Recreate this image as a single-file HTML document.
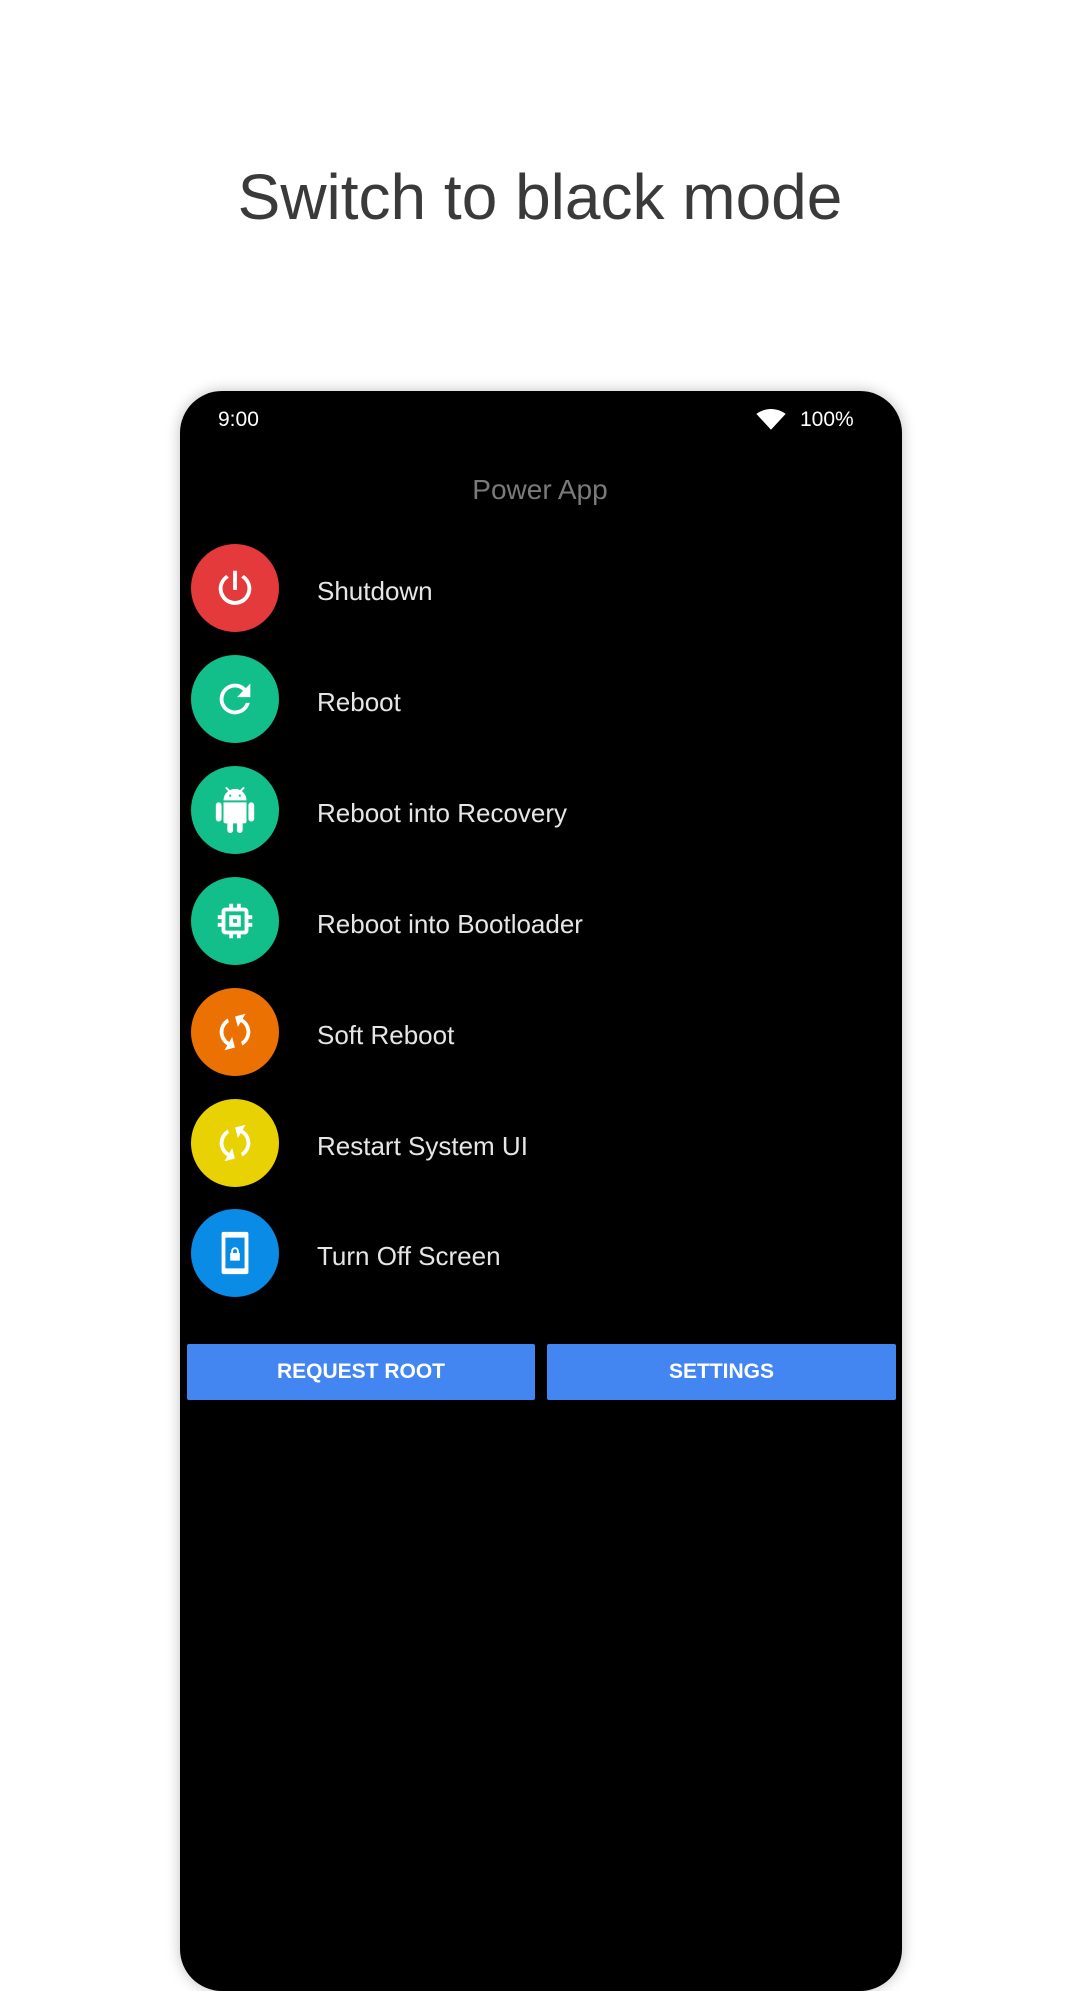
<!DOCTYPE html>
<html><head><meta charset="utf-8"><style>
*{margin:0;padding:0;box-sizing:border-box}
body{width:1080px;height:1920px;background:#fff;position:relative;overflow:hidden;font-family:"Liberation Sans","DejaVu Sans",sans-serif}
.title{position:absolute;top:160px;left:0;width:1080px;text-align:center;font-size:64px;color:#3a3a3a}
.phone{position:absolute;left:180px;top:391px;width:722px;height:1600px;background:#000;border-radius:42px;box-shadow:0 0 14px rgba(0,0,0,.25)}
.st{position:absolute;top:408px;font-size:21px;color:#fff}
.app{position:absolute;top:474px;left:0;width:1080px;text-align:center;font-size:28px;color:#7a7a7a}
.row{position:absolute;left:191px;width:600px;height:88px}
.c{position:absolute;left:0;top:0;width:88px;height:88px;border-radius:50%;display:flex;align-items:center;justify-content:center}
.c svg{width:46px;height:46px;fill:#fff}
.t{position:absolute;left:126px;top:32px;font-size:26px;color:#e6e6e6}
.btn{position:absolute;top:1344px;height:56px;background:#4386f2;color:#fff;font-weight:bold;font-size:21px;display:flex;align-items:center;justify-content:center;border-radius:2px}
</style></head><body>
<div class="title">Switch to black mode</div>
<div class="phone"></div>
<div class="st" style="left:218px">9:00</div>
<svg style="position:absolute;left:756px;top:409px" width="30" height="22" viewBox="0 0 24 18"><path d="M12 17L0 4C3.5 1.5 7.5 0 12 0s8.5 1.5 12 4z" fill="#fff"/></svg>
<div class="st" style="left:800px">100%</div>
<div class="app">Power App</div>

<div class="row" style="top:544px"><div class="c" style="background:#e53a3c"><svg viewBox="0 0 24 24"><path d="M11 3h2v10h-2z"/><path d="M16.6 5.2l-1.4 1.4A6.5 6.5 0 1 1 8.8 6.6L7.4 5.2A8.5 8.5 0 1 0 16.6 5.2z"/></svg></div><div class="t">Shutdown</div></div>
<div class="row" style="top:655px"><div class="c" style="background:#12bf8b"><svg viewBox="0 0 24 24"><path d="M17.65 6.35A7.96 7.96 0 0 0 12 4a8 8 0 1 0 7.73 10h-2.08A6 6 0 1 1 12 6c1.66 0 3.14.69 4.22 1.78L13 11h7V4l-2.35 2.35z"/></svg></div><div class="t">Reboot</div></div>
<div class="row" style="top:766px"><div class="c" style="background:#12bf8b"><svg viewBox="0 0 24 24"><path d="M6 18c0 .55.45 1 1 1h1v3.5c0 .83.67 1.5 1.5 1.5s1.5-.67 1.5-1.5V19h2v3.5c0 .83.67 1.5 1.5 1.5s1.5-.67 1.5-1.5V19h1c.55 0 1-.45 1-1V8H6v10zM3.5 8C2.67 8 2 8.67 2 9.5v7c0 .83.67 1.5 1.5 1.5S5 17.330 5 16.5v-7C5 8.67 4.33 8 3.5 8zm17 0c-.83 0-1.5.67-1.5 1.5v7c0 .83.67 1.5 1.5 1.5s1.5-.67 1.5-1.5v-7c0-.83-.67-1.5-1.5-1.5zm-4.97-5.84l1.3-1.3c.2-.2.2-.51 0-.71-.2-.2-.51-.2-.71 0l-1.48 1.48A5.84 5.84 0 0 0 12 1c-.96 0-1.86.23-2.66.63L7.85.15c-.2-.2-.51-.2-.71 0-.2.2-.2.51 0 .71l1.31 1.31A5.98 5.98 0 0 0 6 7h12c0-1.99-.97-3.75-2.47-4.84zM10 5H9V4h1v1zm5 0h-1V4h1v1z"/></svg></div><div class="t">Reboot into Recovery</div></div>
<div class="row" style="top:877px"><div class="c" style="background:#12bf8b"><svg viewBox="0 0 24 24"><path d="M15 9H9v6h6V9zm-2 4h-2v-2h2v2zm8-2V9h-2V7c0-1.1-.9-2-2-2h-2V3h-2v2h-2V3H9v2H7c-1.1 0-2 .9-2 2v2H3v2h2v2H3v2h2v2c0 1.1.9 2 2 2h2v2h2v-2h2v2h2v-2h2c1.1 0 2-.9 2-2v-2h2v-2h-2v-2h2zm-4 6H7V7h10v10z"/></svg></div><div class="t">Reboot into Bootloader</div></div>
<div class="row" style="top:988px"><div class="c" style="background:#ec7103"><svg viewBox="0 0 24 24"><path d="M12 4V1L8 5l4 4V6c3.31 0 6 2.69 6 6 0 1.01-.25 1.97-.7 2.8l1.46 1.46A7.93 7.93 0 0 0 20 12c0-4.42-3.58-8-8-8zm0 14c-3.31 0-6-2.69-6-6 0-1.01.25-1.97.7-2.8L5.24 7.74A7.93 7.93 0 0 0 4 12c0 4.42 3.58 8 8 8v3l4-4-4-4v3z" transform="rotate(30 12 12)"/></svg></div><div class="t">Soft Reboot</div></div>
<div class="row" style="top:1099px"><div class="c" style="background:#e8d203"><svg viewBox="0 0 24 24"><path d="M12 4V1L8 5l4 4V6c3.31 0 6 2.69 6 6 0 1.01-.25 1.97-.7 2.8l1.46 1.46A7.93 7.93 0 0 0 20 12c0-4.42-3.58-8-8-8zm0 14c-3.31 0-6-2.69-6-6 0-1.01.25-1.97.7-2.8L5.24 7.74A7.93 7.93 0 0 0 4 12c0 4.42 3.58 8 8 8v3l4-4-4-4v3z" transform="rotate(30 12 12)"/></svg></div><div class="t">Restart System UI</div></div>
<div class="row" style="top:1209px"><div class="c" style="background:#0a8be6"><svg viewBox="0 0 24 24"><path d="M6 1h12a1 1 0 0 1 1 1v20a1 1 0 0 1-1 1H6a1 1 0 0 1-1-1V2a1 1 0 0 1 1-1zm1 3v16h10V4z"/><path d="M10 12v-1a2 2 0 0 1 4 0v1h.5v4h-5v-4zm1 0h2v-1a1 1 0 0 0-2 0z"/></svg></div><div class="t">Turn Off Screen</div></div>

<div class="btn" style="left:187px;width:348px">REQUEST ROOT</div>
<div class="btn" style="left:547px;width:349px">SETTINGS</div>
</body></html>
